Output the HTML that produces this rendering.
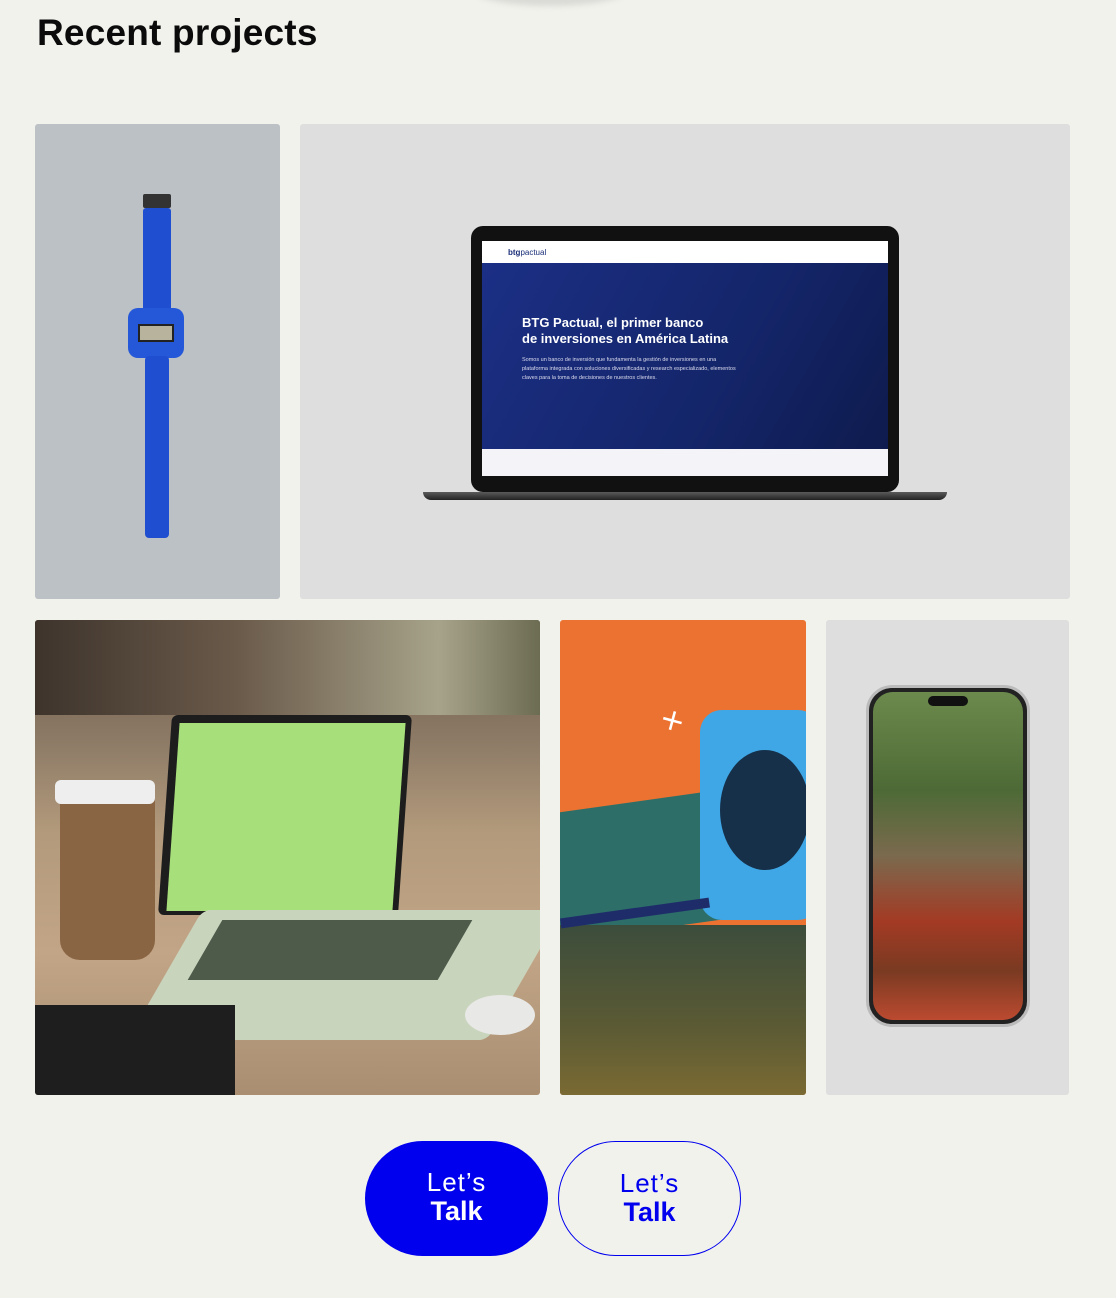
<!DOCTYPE html>
<html><head><meta charset="utf-8"><style>
*{margin:0;padding:0;box-sizing:border-box}
body{width:1116px;height:1298px;background:#f2f2ed;position:relative;overflow:hidden;font-family:"Liberation Sans",sans-serif}
.abs{position:absolute}
h1{position:absolute;left:37px;top:12px;font-size:37px;font-weight:700;color:#0b0b0b;letter-spacing:0.2px}
.t{position:absolute;border-radius:3px;overflow:hidden}
.btn{position:absolute;top:1141px;width:183px;height:115px;border-radius:58px;text-align:center;color:#0000ee;font-size:26px;line-height:29px;padding-top:27px;letter-spacing:1px;font-weight:300}
.btn b{font-weight:900;font-size:27px;display:block;letter-spacing:0}
</style></head><body>
<div class="abs" style="left:470px;top:-30px;width:160px;height:36px;border-radius:50%;background:#d9d9d5;filter:blur(3px)"></div>
<h1>Recent projects</h1>

<div class="t" style="left:35px;top:124px;width:245px;height:475px;background:#bcc1c6">
  <div class="abs" style="left:108px;top:70px;width:28px;height:14px;background:#333;border-radius:2px"></div>
  <div class="abs" style="left:108px;top:84px;width:28px;height:105px;background:#1f4fd0;border-radius:3px"></div>
  <div class="abs" style="left:93px;top:184px;width:56px;height:50px;background:#2558d8;border-radius:10px"></div>
  <div class="abs" style="left:103px;top:200px;width:36px;height:18px;background:#b7b39c;border:2px solid #222"></div>
  <div class="abs" style="left:110px;top:232px;width:24px;height:182px;background:#1f4fd0;border-radius:4px"></div>
</div>

<div class="t" style="left:300px;top:124px;width:770px;height:475px;background:#dedede">
  <div class="abs" style="left:171px;top:102px;width:428px;height:266px;background:#111;border-radius:12px"></div>
  <div class="abs" style="left:182px;top:117px;width:406px;height:22px;background:#fff"></div>
  <div class="abs" style="left:208px;top:124px;font-size:8px;color:#1a2e78;font-weight:700">btg<span style="font-weight:400">pactual</span></div>
  <div class="abs" style="left:182px;top:139px;width:406px;height:186px;background:linear-gradient(120deg,#1b2f85,#142569 60%,#0e1b4e)"></div>
  <div class="abs" style="left:222px;top:191px;font-size:13px;font-weight:700;color:#fff;line-height:16px">BTG Pactual, el primer banco<br>de inversiones en América Latina</div>
  <div class="abs" style="left:222px;top:232px;font-size:5.5px;color:#dde;line-height:9px;width:220px">Somos un banco de inversión que fundamenta la gestión de inversiones en una plataforma integrada con soluciones diversificadas y research especializado, elementos claves para la toma de decisiones de nuestros clientes.</div>
  <div class="abs" style="left:182px;top:325px;width:406px;height:27px;background:#f4f4f8"></div>
  <div class="abs" style="left:123px;top:368px;width:524px;height:8px;background:linear-gradient(#5a5a5a,#222);border-radius:0 0 20px 20px"></div>
</div>

<div class="t" style="left:35px;top:620px;width:505px;height:475px;background:linear-gradient(180deg,#6b5a4a 0%,#8c7a66 25%,#b39a7c 45%,#c2a586 70%,#a98e72 100%)">
  <div class="abs" style="left:0;top:0;width:505px;height:95px;background:linear-gradient(90deg,#3e342c,#6a5a4a 40%,#a7a38a 80%,#6c6c52)"></div>
  <div class="abs" style="left:25px;top:170px;width:95px;height:170px;background:#8a6544;border-radius:6px 6px 20px 20px"></div>
  <div class="abs" style="left:20px;top:160px;width:100px;height:24px;background:#eee;border-radius:6px"></div>
  <div class="abs" style="left:130px;top:95px;width:240px;height:200px;background:#1d1d1d;transform:skewX(-4deg);border-radius:6px"></div>
  <div class="abs" style="left:138px;top:103px;width:226px;height:188px;background:#a7e07a;transform:skewX(-4deg)"></div>
  <div class="abs" style="left:130px;top:290px;width:360px;height:130px;background:#c9d4bd;transform:skewX(-30deg);border-radius:8px"></div>
  <div class="abs" style="left:170px;top:300px;width:250px;height:60px;background:#4e5a4a;transform:skewX(-30deg)"></div>
  <div class="abs" style="left:0;top:385px;width:200px;height:90px;background:#1e1e1e"></div>
  <div class="abs" style="left:430px;top:375px;width:70px;height:40px;background:#e8e8e6;border-radius:50%"></div>
</div>

<div class="t" style="left:560px;top:620px;width:246px;height:475px;background:#ec7231">
  <div class="abs" style="left:0;top:175px;width:246px;height:130px;background:#2d6f68;transform:skewY(-8deg)"></div>
  <div class="abs" style="left:0;top:305px;width:246px;height:170px;background:linear-gradient(#3c4d3c,#5b5a34 60%,#7a6a33)"></div>
  <div class="abs" style="left:140px;top:90px;width:120px;height:210px;background:#3fa7e6;border-radius:22px"></div>
  <div class="abs" style="left:160px;top:130px;width:90px;height:120px;background:#16304a;border-radius:50%"></div>
  <div class="abs" style="left:0;top:288px;width:150px;height:10px;background:#1e2d6a;transform:rotate(-8deg)"></div>
  <div class="abs" style="left:102px;top:86px;font-size:26px;color:#fff;transform:rotate(-30deg)">✕</div>
</div>

<div class="t" style="left:826px;top:620px;width:243px;height:475px;background:#dedede">
  <div class="abs" style="left:40px;top:65px;width:164px;height:342px;background:#222;border-radius:26px;border:3px solid #bbb"></div>
  <div class="abs" style="left:47px;top:72px;width:150px;height:328px;border-radius:20px;background:linear-gradient(180deg,#6c8a4c 0%,#4d6a36 30%,#7b6a4e 50%,#a33a24 70%,#7a3a22 85%,#bb4a30 100%)"></div>
  <div class="abs" style="left:102px;top:76px;width:40px;height:10px;background:#111;border-radius:6px"></div>
</div>

<div class="btn" style="left:365px;background:#0000ee;color:#fff">Let’s<b>Talk</b></div>
<div class="btn" style="left:558px;border:1px solid #0000ee">Let’s<b>Talk</b></div>
</body></html>
